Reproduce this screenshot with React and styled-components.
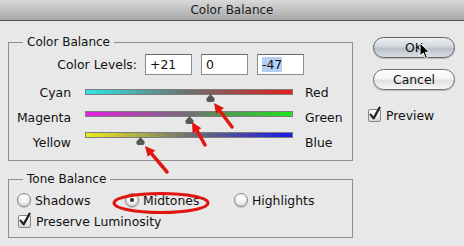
import styled, { createGlobalStyle } from "styled-components";

const GlobalStyle = createGlobalStyle`
  html, body {
    margin: 0;
    padding: 0;
    background: #e8e8e8;
  }
  body {
    font-family: "DejaVu Sans", "Liberation Sans", sans-serif;
    font-size: 12px;
    color: #111;
  }
`;

const sliders = [
  { left: "Cyan", right: "Red", value: 21, colors: ["#2ee6e6", "#6e6e6e", "#e41c1c"] },
  { left: "Magenta", right: "Green", value: 0, colors: ["#e41ee4", "#707070", "#1ee41e"] },
  { left: "Yellow", right: "Blue", value: -47, colors: ["#ecec1e", "#707070", "#1a1ae8"] },
];

const arrows = [
  { tail: [232, 127], line: [220, 111], head: "214,103 224,108 216,114" },
  { tail: [205, 145], line: [197, 130.7], head: "192,122 201.3,128.2 192.6,133.2" },
  { tail: [167, 172], line: [151.5, 153.6], head: "145,146 155.3,150.4 147.7,156.8" },
];

export default function App() {
  return (
    <>
      <GlobalStyle />
      <Window>
        <TitleBar>Color Balance</TitleBar>
        <Body>
          <Main>
            <Group $height={119}>
              <Legend>Color Balance</Legend>
              <LevelsRow>
                <LevelsLabel>Color Levels:</LevelsLabel>
                <LevelInput>+21</LevelInput>
                <LevelInput>0</LevelInput>
                <LevelInput>
                  <Selected>-47</Selected>
                </LevelInput>
              </LevelsRow>
              <SliderArea>
                <LeftLabels>
                  {sliders.map((s) => (
                    <div key={s.left}>{s.left}</div>
                  ))}
                </LeftLabels>
                <SliderCol>
                  {sliders.map((s) => (
                    <SliderItem key={s.left}>
                      <Track $colors={s.colors} />
                      <Thumb
                        style={{ left: `${1 + ((s.value + 100) / 200) * 206 - 4.5}px` }}
                        width="9"
                        height="8"
                        viewBox="0 0 9 8"
                      >
                        <path d="M4.5 0 L8.5 4.5 Q9 8 6.5 8 L2.5 8 Q0 8 0.5 4.5 Z" fill="#575757" />
                      </Thumb>
                    </SliderItem>
                  ))}
                </SliderCol>
                <RightLabels>
                  {sliders.map((s) => (
                    <div key={s.right}>{s.right}</div>
                  ))}
                </RightLabels>
              </SliderArea>
            </Group>
            <Group $height={59} $gap={18}>
              <Legend>Tone Balance</Legend>
              <RadioRow>
                <Option>
                  <Radio />
                  Shadows
                </Option>
                <Option>
                  <Radio $checked />
                  Midtones
                </Option>
                <Option>
                  <Radio />
                  Highlights
                </Option>
              </RadioRow>
              <CheckRow>
                <CheckBox />
                Preserve Luminosity
              </CheckRow>
            </Group>
          </Main>
          <Side>
            <Button $primary>OK</Button>
            <Button $gap={11}>Cancel</Button>
            <PreviewRow>
              <CheckBox />
              Preview
            </PreviewRow>
          </Side>
        </Body>

        <Overlay width="464" height="246" viewBox="0 0 464 246">
          <ellipse cx="161" cy="203" rx="47" ry="9.5" fill="none" stroke="#e0150f" strokeWidth="3" />
          {arrows.map((a, i) => (
            <g key={i}>
              <line
                x1={a.tail[0]}
                y1={a.tail[1]}
                x2={a.line[0]}
                y2={a.line[1]}
                stroke="#e3160f"
                strokeWidth="3.5"
                strokeLinecap="round"
              />
              <polygon points={a.head} fill="#e3160f" />
            </g>
          ))}
          <path
            d="M420 43 L420 56 L423.2 53 L425.6 58.4 L427.6 57.5 L425.3 52.2 L429.5 52.2 Z"
            fill="#000"
            stroke="#fff"
            strokeWidth="1"
            strokeLinejoin="round"
          />
        </Overlay>
      </Window>
    </>
  );
}

function CheckBox() {
  return (
    <Box>
      <CheckMark width="14" height="16" viewBox="0 0 14 16">
        <path d="M2.6 8.6 L5.6 12.4 L11.6 1.6" fill="none" stroke="#222" strokeWidth="2.2" strokeLinecap="round" strokeLinejoin="round" />
      </CheckMark>
    </Box>
  );
}

const Window = styled.div`
  position: relative;
  width: 464px;
  height: 246px;
  overflow: hidden;
  background: #e8e8e8;
`;

const TitleBar = styled.div`
  height: 20px;
  line-height: 20px;
  border-bottom: 1px solid #4e4e4e;
  background: linear-gradient(#d9d9d9, #a8a8a8);
  text-align: center;
  font-size: 12px;
  color: #1a1a1a;
`;

const Body = styled.div`
  display: flex;
  align-items: flex-start;
`;

const Main = styled.div`
  margin-left: 8px;
  padding-top: 21px;
`;

const Group = styled.div`
  position: relative;
  box-sizing: border-box;
  width: 345px;
  height: ${(p) => p.$height}px;
  margin-top: ${(p) => p.$gap || 0}px;
  border: 1px solid #8e8e8e;
`;

// sits on the top border like a fieldset legend
const Legend = styled.span`
  position: absolute;
  top: -9px;
  left: 14px;
  padding: 0 4px;
  line-height: 16px;
  background: #e8e8e8;
  font-size: 12px;
`;

const LevelsRow = styled.div`
  display: flex;
  align-items: center;
  margin-top: 11px;
  height: 21px;
`;

const LevelsLabel = styled.div`
  width: 128px;
  margin-right: 8px;
  text-align: right;
  font-size: 12.4px;
`;

const LevelInput = styled.div`
  box-sizing: border-box;
  width: 47px;
  height: 21px;
  margin-right: 9px;
  padding-left: 4px;
  line-height: 19px;
  border: 1px solid #8c8c8c;
  border-top-color: #6a6a6a;
  background: #fff;
  font-size: 12.4px;
`;

const Selected = styled.span`
  background: #b3d0f4;
`;

const SliderArea = styled.div`
  display: flex;
  margin-top: 5px;
`;

const LeftLabels = styled.div`
  width: 62px;
  text-align: right;
  line-height: 25px;
  font-size: 12.4px;
`;

const SliderCol = styled.div`
  width: 208px;
  margin-left: 14px;
  padding-top: 9px;
`;

const SliderItem = styled.div`
  position: relative;
  height: 21.5px;
`;

const Track = styled.div`
  box-sizing: border-box;
  height: 6px;
  border: 1px solid #7e7e7e;
  background: linear-gradient(
    to right,
    ${(p) => p.$colors[0]} 0%,
    ${(p) => p.$colors[1]} 50%,
    ${(p) => p.$colors[2]} 100%
  );
`;

const Thumb = styled.svg`
  position: absolute;
  top: 5px;
  display: block;
`;

const RightLabels = styled.div`
  margin-left: 12px;
  line-height: 25px;
  font-size: 12.4px;
`;

const RadioRow = styled.div`
  display: grid;
  grid-template-columns: 108px 109px auto;
  align-items: center;
  height: 16px;
  margin-top: 12px;
  padding-left: 8px;
  font-size: 12.4px;
`;

const Option = styled.div`
  display: flex;
  align-items: center;
  gap: 4px;
`;

const Radio = styled.span`
  position: relative;
  box-sizing: border-box;
  width: 14px;
  height: 14px;
  border-radius: 50%;
  border: 1px solid #868686;
  background: radial-gradient(circle at 50% 30%, #ffffff 0%, #f2f2f2 45%, #c9c9c9 100%);
  box-shadow: 0 1px 1px rgba(0, 0, 0, 0.15);

  &::after {
    content: "";
    display: ${(p) => (p.$checked ? "block" : "none")};
    position: absolute;
    left: 4px;
    top: 4px;
    width: 4px;
    height: 4px;
    border-radius: 50%;
    background: #2a2a2a;
  }
`;

const CheckRow = styled.div`
  display: flex;
  align-items: center;
  gap: 5px;
  height: 16px;
  margin-top: 5px;
  padding-left: 9px;
  font-size: 12.4px;
`;

const Box = styled.span`
  position: relative;
  box-sizing: border-box;
  width: 13px;
  height: 13px;
  border: 1px solid #858585;
  border-radius: 2px;
  background: linear-gradient(#ffffff, #d8d8d8);
`;

const CheckMark = styled.svg`
  position: absolute;
  left: -1px;
  top: -4px;
`;

const Side = styled.div`
  display: flex;
  flex-direction: column;
  margin-left: 15px;
  padding-top: 16px;
`;

const Button = styled.div`
  box-sizing: border-box;
  width: 82px;
  height: 21px;
  margin-left: 5px;
  margin-top: ${(p) => p.$gap || 0}px;
  border-radius: 11px;
  border: 1px solid ${(p) => (p.$primary ? "#5f6368" : "#6f6f6f")};
  background: ${(p) =>
    p.$primary
      ? "linear-gradient(#eef0f3 0%, #d3d8de 45%, #b9c0c8 55%, #d9dee3 100%)"
      : "linear-gradient(#ffffff 0%, #f4f4f4 45%, #e2e2e2 55%, #f6f6f6 100%)"};
  box-shadow: 0 1px 1px rgba(0, 0, 0, 0.2);
  text-align: center;
  line-height: 19px;
  font-size: 12.4px;
  color: #111;
`;

const PreviewRow = styled.div`
  display: flex;
  align-items: center;
  gap: 5px;
  height: 16px;
  margin-top: 17px;
  font-size: 12.4px;
`;

const Overlay = styled.svg`
  position: absolute;
  left: 0;
  top: 0;
  pointer-events: none;
`;
